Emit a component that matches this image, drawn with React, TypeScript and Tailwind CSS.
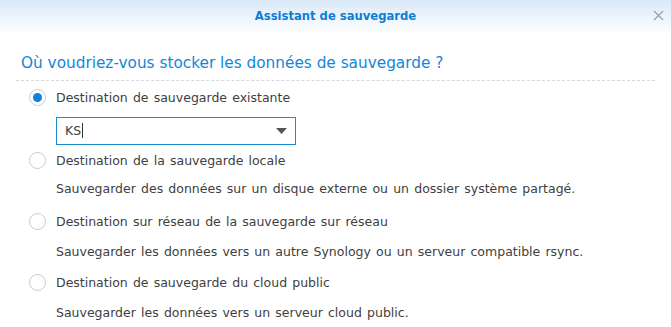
import React from "react";

function Radio({ checked }: { checked?: boolean }) {
  return (
    <span className="flex h-[17px] w-[17px] shrink-0 items-center justify-center rounded-full border border-[#c8ccd0] bg-white">
      {checked && <span className="h-[9px] w-[9px] rounded-full bg-[#0e80e0]" />}
    </span>
  );
}

function Option({ label, checked }: { label: string; checked?: boolean }) {
  return (
    <div className="flex h-[20px] items-center gap-[10px] pl-[29px]">
      <Radio checked={checked} />
      <span>{label}</span>
    </div>
  );
}

export default function App() {
  return (
    <div
      className="relative h-[327px] w-[671px] overflow-hidden bg-white text-[12.5px] text-[#404040] [word-spacing:1.2px]"
      style={{ fontFamily: '"DejaVu Sans", Verdana, sans-serif' }}
    >
      <div className="flex h-[34px] items-center justify-center bg-gradient-to-b from-[#d9e9f8] to-white [word-spacing:0px]">
        <span className="text-[11.6px] font-bold text-[#0c7ed6]">Assistant de sauvegarde</span>
      </div>
      <svg className="absolute right-[7px] top-[10px]" width="11" height="11" viewBox="0 0 11 11">
        <path d="M1 1 L10 10 M10 1 L1 10" stroke="#9aa3ab" strokeWidth="1.4" />
      </svg>
      <div className="px-[16px] pt-[18px]">
        <div className="border-b border-dashed border-[#d4d8dc] pb-[5px] pl-[5px] text-[15.3px] text-[#1286d8] [word-spacing:0px]">
          Où voudriez-vous stocker les données de sauvegarde ?
        </div>
      </div>
      <div className="flex flex-col pt-[7px]">
        <Option label="Destination de sauvegarde existante" checked />
        <div className="pl-[56px] pt-[9px]">
          <div className="flex h-[28px] w-[240px] items-center justify-between border border-[#1a8ccf] pl-[8px] pr-[8px]">
            <span className="flex items-center">
              KS<span className="ml-[1px] inline-block h-[15px] w-[1px] bg-[#333]" />
            </span>
            <svg width="11" height="6" viewBox="0 0 11 6">
              <path d="M0 0 H11 L5.5 6 Z" fill="#555" />
            </svg>
          </div>
        </div>
        <div className="pt-[6px]">
          <Option label="Destination de la sauvegarde locale" />
        </div>
        <div className="mt-[8px] flex h-[20px] items-center pl-[56px]">
          Sauvegarder des données sur un disque externe ou un dossier système partagé.
        </div>
        <div className="mt-[13px]">
          <Option label="Destination sur réseau de la sauvegarde sur réseau" />
        </div>
        <div className="mt-[10px] flex h-[20px] items-center pl-[56px]">
          Sauvegarder les données vers un autre Synology ou un serveur compatible rsync.
        </div>
        <div className="mt-[11px]">
          <Option label="Destination de sauvegarde du cloud public" />
        </div>
        <div className="mt-[10px] flex h-[20px] items-center pl-[56px]">
          Sauvegarder les données vers un serveur cloud public.
        </div>
      </div>
    </div>
  );
}
